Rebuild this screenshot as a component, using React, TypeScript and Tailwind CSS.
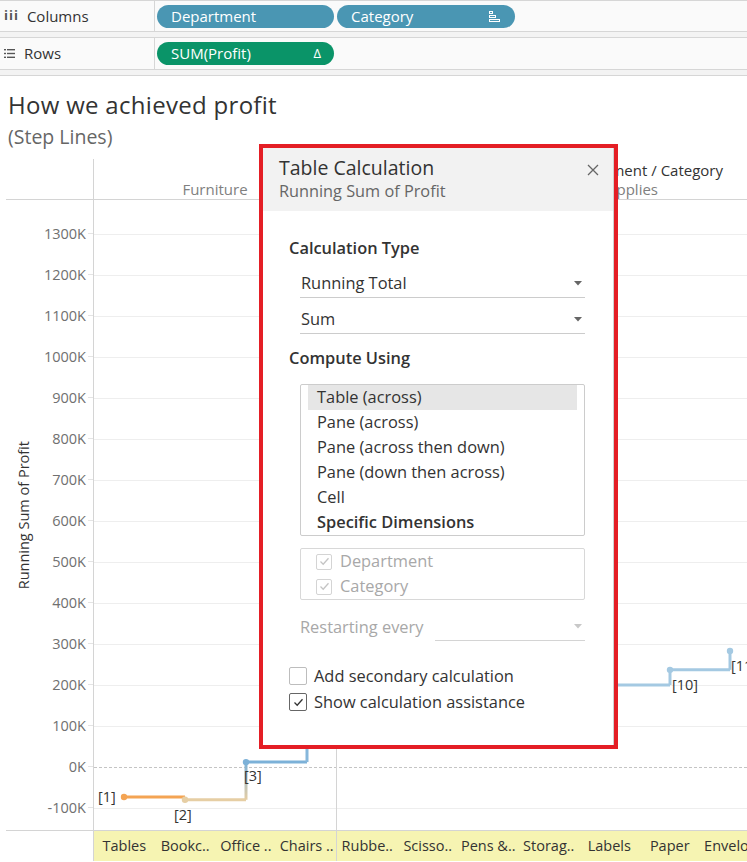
import React from 'react';

const axis = [1300, 1200, 1100, 1000, 900, 800, 700, 600, 500, 400, 300, 200, 100, 0, -100];

const pane1 = ['Tables', 'Bookc..', 'Office ..', 'Chairs ..'];
const pane2 = ['Rubbe..', 'Scisso..', 'Pens &..', 'Storag..', 'Labels', 'Paper', 'Envelo..'];

// value (K) -> y inside plot
const yOf = (v: number) => 567 - (v / 100) * 41;

const points = [
  { x: 30, v: -73, c: '#f4a453' },
  { x: 91, v: -80, c: '#e6cea4' },
  { x: 152, v: 12, c: '#7cb1d8' },
  { x: 213, v: 110, c: '#86b7db' },
  { x: 273, v: 135, c: '#8fbcde' },
  { x: 334, v: 150, c: '#95c0df' },
  { x: 394, v: 170, c: '#9ac3e0' },
  { x: 455, v: 160, c: '#9ec5e1' },
  { x: 515, v: 200, c: '#a4c9e2' },
  { x: 576, v: 237, c: '#a4c9e2' },
  { x: 636, v: 283, c: '#a4c9e2' },
];

function Caret({ color = '#666' }: { color?: string }) {
  return (
    <svg width="8" height="5" viewBox="0 0 8 5">
      <path d="M0 0 L8 0 L4 4.5 Z" fill={color} />
    </svg>
  );
}

function Check({ color }: { color: string }) {
  return (
    <svg width="11" height="9" viewBox="0 0 11 9">
      <path d="M1.5 4.5 L4.2 7.2 L9.5 1.2" fill="none" stroke={color} strokeWidth="1.3" />
    </svg>
  );
}

function Shelves() {
  return (
    <div className="bg-[#f3f3f3] border-t border-[#d6d6d6]">
      <div className="flex h-[31px] bg-[#fafafa] border-b border-[#d6d6d6]">
        <div className="w-[155px] border-r border-[#d6d6d6] flex items-center pl-[4px] gap-[8px] text-[15px] text-[#333]">
          <span className="font-bold text-[13px] tracking-[1px] text-[#555]">iii</span>
          <span>Columns</span>
        </div>
        <div className="flex items-center gap-[3px] pl-[2px]">
          <div className="w-[177px] h-[23px] rounded-full bg-[#4a96b3] text-white text-[15px] flex items-center pl-[14px]">
            Department
          </div>
          <div className="w-[178px] h-[23px] rounded-full bg-[#4a96b3] text-white text-[15px] flex items-center pl-[14px] pr-[15px] justify-between">
            <span>Category</span>
            <svg width="11" height="11" viewBox="0 0 11 11">
              <rect x="0.5" y="0.5" width="3" height="2" fill="none" stroke="#fff" strokeWidth="1" />
              <rect x="0.5" y="4.5" width="6" height="2" fill="none" stroke="#fff" strokeWidth="1" />
              <rect x="0.5" y="8.5" width="10" height="2" fill="none" stroke="#fff" strokeWidth="1" />
            </svg>
          </div>
        </div>
      </div>
      <div className="h-[5px]" />
      <div className="flex h-[33px] bg-[#fafafa] border-y border-[#d6d6d6]">
        <div className="w-[155px] border-r border-[#d6d6d6] flex items-center pl-[4px] gap-[9px] text-[15px] text-[#333]">
          <svg width="11" height="9" viewBox="0 0 11 9">
            <rect x="0" y="0" width="2" height="1.4" fill="#555" />
            <rect x="3" y="0" width="8" height="1.4" fill="#555" />
            <rect x="0" y="3.8" width="2" height="1.4" fill="#555" />
            <rect x="3" y="3.8" width="8" height="1.4" fill="#555" />
            <rect x="0" y="7.6" width="2" height="1.4" fill="#555" />
            <rect x="3" y="7.6" width="8" height="1.4" fill="#555" />
          </svg>
          <span>Rows</span>
        </div>
        <div className="flex items-center pl-[2px]">
          <div className="w-[177px] h-[23px] rounded-full bg-[#0a9468] text-white text-[15px] flex items-center justify-between pl-[14px] pr-[13px]">
            <span>SUM(Profit)</span>
            <span className="text-[13px]">Δ</span>
          </div>
        </div>
      </div>
      <div className="h-[6px] border-b border-[#d6d6d6]" />
    </div>
  );
}

function Plot() {
  const segs: React.ReactNode[] = [];
  points.forEach((p, i) => {
    const n = points[i + 1];
    if (!n) return;
    const y1 = yOf(p.v);
    const y2 = yOf(n.v);
    segs.push(<line key={'h' + i} x1={p.x} y1={y1} x2={n.x} y2={y1} stroke={p.c} strokeWidth="3" />);
    segs.push(
      <line key={'v' + i} x1={n.x} y1={y1} x2={n.x} y2={y2} stroke={i === 1 ? 'url(#g12)' : n.c} strokeWidth="3" />
    );
  });
  return (
    <svg width="653" height="630" className="block">
      <defs>
        <linearGradient id="g12" gradientUnits="userSpaceOnUse" x1="0" y1={yOf(-80)} x2="0" y2={yOf(12)}>
          <stop offset="0" stopColor="#e6cea4" />
          <stop offset="1" stopColor="#7cb1d8" />
        </linearGradient>
      </defs>
      {axis.map((v) => (
        <line
          key={v}
          x1="0"
          x2="653"
          y1={yOf(v) + 0.5}
          y2={yOf(v) + 0.5}
          stroke={v === 0 ? '#c4c4c4' : '#eeeeee'}
          strokeDasharray={v === 0 ? '3 2' : undefined}
          strokeWidth="1"
        />
      ))}
      <line x1="242.5" x2="242.5" y1="0" y2="630" stroke="#d4d4d4" />
      {segs}
      {points.map((p, i) => (
        <circle key={i} cx={p.x} cy={yOf(p.v)} r="3.2" fill={p.c} />
      ))}
      <g fontSize="14.5" fill="#333" fontFamily="'Open Sans', sans-serif">
        <text x="4" y={yOf(-73) + 5}>[1]</text>
        <text x="80" y={yOf(-80) + 20}>[2]</text>
        <text x="150" y={yOf(12) + 19}>[3]</text>
        <text x="578" y={yOf(200) + 5}>[10]</text>
        <text x="637" y={yOf(283) + 20}>[11]</text>
      </g>
    </svg>
  );
}

function Chart() {
  return (
    <div className="ml-[6px] flex flex-col">
      <div className="flex h-[41px] border-b border-[#d4d4d4]">
        <div className="w-[88px] shrink-0 border-r border-[#d4d4d4]" />
        <div className="flex-1 flex flex-col overflow-hidden">
          <div className="h-[20px] flex items-end justify-end pr-[24px] text-[15px] text-[#333] leading-[18px]">
            Department / Category
          </div>
          <div className="flex h-[20px]">
            <div className="w-[243px] shrink-0 border-r border-[#d4d4d4] text-center text-[15px] text-[#808080] leading-[20px]">
              Furniture
            </div>
            <div className="w-[538px] shrink-0 text-center text-[15px] text-[#808080] leading-[20px]">
              Office Supplies
            </div>
          </div>
        </div>
      </div>
      <div className="flex h-[631px] border-b border-[#d4d4d4]">
        <div className="w-[88px] shrink-0 border-r border-[#d4d4d4] flex">
          <div className="w-[36px] flex items-center justify-center">
            <span className="[writing-mode:vertical-rl] rotate-180 text-[14.5px] text-[#333] whitespace-nowrap">
              Running Sum of Profit
            </span>
          </div>
          <div className="flex-1 flex flex-col pt-[13px]">
            {axis.map((v) => (
              <div key={v} className="h-[41px] flex items-center justify-end">
                <span className="text-[14.5px] text-[#707070]">{v}K</span>
                <span className="w-[5px] h-px bg-[#e4e4e4] ml-[2px]" />
              </div>
            ))}
          </div>
        </div>
        <div className="flex-1 overflow-hidden">
          <Plot />
        </div>
      </div>
      <div className="flex h-[30px]">
        <div className="w-[88px] shrink-0 border-r border-[#d4d4d4]" />
        <div className="flex-1 flex bg-[#f6f4b2] overflow-hidden text-[14.5px] text-[#333]">
          <div className="w-[243px] shrink-0 flex border-r border-[#d4d4d4]">
            {pane1.map((l) => (
              <div key={l} className="w-[60.75px] shrink-0 flex items-center justify-center whitespace-nowrap">
                {l}
              </div>
            ))}
          </div>
          {pane2.map((l) => (
            <div key={l} className="w-[60.5px] shrink-0 flex items-center justify-center whitespace-nowrap">
              {l}
            </div>
          ))}
        </div>
      </div>
    </div>
  );
}

function Dialog() {
  const items = ['Table (across)', 'Pane (across)', 'Pane (across then down)', 'Pane (down then across)', 'Cell'];
  return (
    <div className="absolute left-[259px] top-[144px] w-[359px] h-[605px] border-4 border-[#e41e25] bg-white">
      <div className="h-full border-r border-[#cfcfcf] flex flex-col">
        <div className="bg-[#f2f2f2] h-[63px] pt-[8px] pl-[16px] pr-[14px] flex justify-between">
          <div>
            <div className="text-[19.5px] leading-[24px] text-[#333]">Table Calculation</div>
            <div className="text-[16.3px] leading-[22px] text-[#666]">Running Sum of Profit</div>
          </div>
          <svg width="12" height="12" viewBox="0 0 12 12" className="mt-[8px]">
            <path d="M1 1 L11 11 M11 1 L1 11" stroke="#666" strokeWidth="1.3" />
          </svg>
        </div>
        <div className="pl-[26px] text-[#333] text-[16.4px]">
          <div className="mt-[26px] font-semibold leading-[22px]">Calculation Type</div>
          <div className="ml-[11px] w-[285px] mt-[11px] h-[28px] border-b border-[#cccccc] flex items-center justify-between pl-[1px] pr-[3px]">
            <span>Running Total</span>
            <Caret />
          </div>
          <div className="ml-[11px] w-[285px] mt-[8px] h-[28px] border-b border-[#cccccc] flex items-center justify-between pl-[1px] pr-[3px]">
            <span>Sum</span>
            <Caret />
          </div>
          <div className="mt-[13px] font-semibold leading-[22px]">Compute Using</div>
          <div className="ml-[11px] w-[285px] mt-[15px] h-[152px] border border-[#cccccc] rounded-[2px] px-[7px]">
            {items.map((t, i) => (
              <div key={t} className={`h-[25px] flex items-center pl-[9px] ${i === 0 ? 'bg-[#e6e6e6]' : ''}`}>
                {t}
              </div>
            ))}
            <div className="h-[25px] flex items-center pl-[9px] font-semibold">Specific Dimensions</div>
          </div>
          <div className="ml-[11px] w-[285px] mt-[12px] h-[52px] border border-[#d8d8d8] rounded-[2px] pl-[15px] text-[#a8a8a8]">
            {['Department', 'Category'].map((t) => (
              <div key={t} className="h-[25px] flex items-center gap-[8px]">
                <span className="w-[16px] h-[16px] border border-[#d4d4d4] rounded-[2px] flex items-center justify-center">
                  <Check color="#c4c4c4" />
                </span>
                {t}
              </div>
            ))}
          </div>
          <div className="ml-[11px] w-[285px] mt-[13px] flex items-center text-[#a8a8a8]">
            <span className="w-[135px]">Restarting every</span>
            <div className="flex-1 h-[28px] border-b border-[#d4d4d4] flex items-center justify-end pr-[3px]">
              <Caret color="#c8c8c8" />
            </div>
          </div>
          <div className="mt-[22px] flex flex-col">
            <div className="h-[26px] flex items-center gap-[7px]">
              <span className="w-[18px] h-[18px] border border-[#bdbdbd] rounded-[2px]" />
              Add secondary calculation
            </div>
            <div className="h-[26px] flex items-center gap-[7px]">
              <span className="w-[18px] h-[18px] border border-[#666] rounded-[2px] flex items-center justify-center">
                <Check color="#333" />
              </span>
              Show calculation assistance
            </div>
          </div>
        </div>
      </div>
    </div>
  );
}

export default function App() {
  return (
    <div className="relative w-[747px] h-[862px] overflow-hidden bg-white [font-family:'Open_Sans',sans-serif]">
      <Shelves />
      <div className="h-[83px] pl-[8px] pt-[14px]">
        <div className="text-[24px] leading-[30px] tracking-[0.3px] text-[#333]">How we achieved profit</div>
        <div className="mt-[5px] text-[19.5px] leading-[24px] text-[#666]">(Step Lines)</div>
      </div>
      <Chart />
      <Dialog />
    </div>
  );
}
